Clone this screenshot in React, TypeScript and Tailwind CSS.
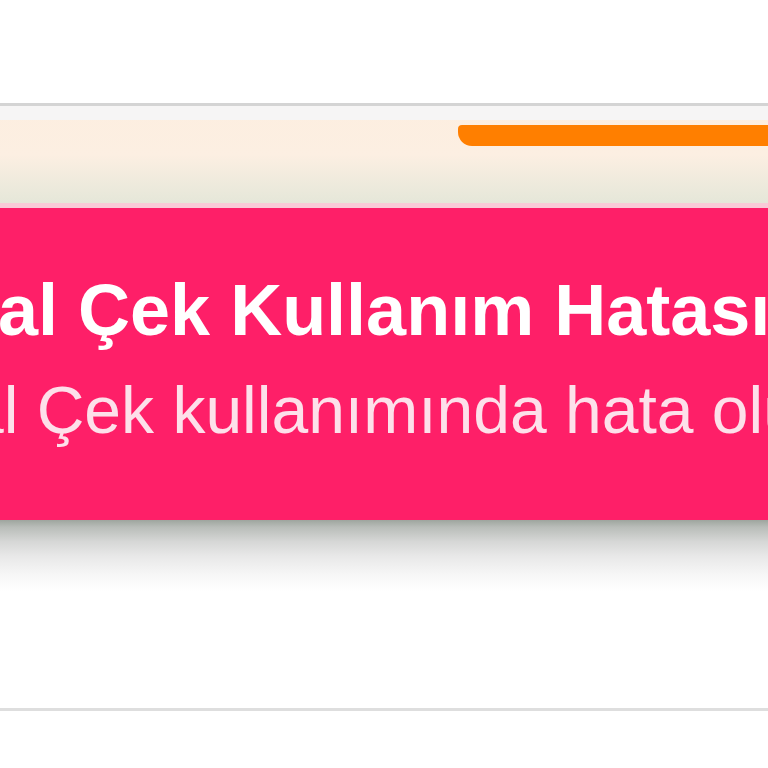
import React from "react";

export default function App() {
  return (
    <div className="w-[768px] h-[768px] overflow-hidden bg-white flex flex-col" style={{ fontFamily: '"Liberation Sans", Arial, sans-serif' }}>
      <div className="h-[103px] shrink-0 bg-white" />
      <div className="h-[3px] shrink-0 bg-[#d4d4d4]" />
      <div className="relative h-[97px] shrink-0 bg-gradient-to-b from-[#fdeee0] via-[#fcefe2] to-[#e5e7d9]">
        <div className="h-[14px] bg-[#f6f5f5]" />
        <div className="absolute left-[458px] top-[19px] right-0 h-[21px] bg-[#ff7f00] rounded-bl-[14px] rounded-tl-[4px]" />
      </div>
      <div className="h-[5px] shrink-0 bg-[#f9cad7]" />
      <div className="h-[312px] shrink-0 bg-[#fe1f68] overflow-hidden flex flex-col">
        <div className="h-[62px] shrink-0" />
        <div className="whitespace-nowrap text-white font-bold text-[72px] leading-[80px] -ml-[2px]">al Çek Kullanım Hatası</div>
        <div className="h-[20px] shrink-0" />
        <div className="whitespace-nowrap text-[#fde0ea] text-[66px] leading-[80px] -ml-[33px]">al Çek kullanımında hata oluştu</div>
      </div>
      <div className="h-[72px] shrink-0 bg-[linear-gradient(to_bottom,#9ea59e_0%,#b9bdb9_10%,#d6d7d6_30%,#e8e8e8_50%,#f6f6f6_75%,#ffffff_100%)]" />
      <div className="h-[116px] shrink-0 bg-white" />
      <div className="h-[3px] shrink-0 bg-[#dedede]" />
      <div className="flex-1 bg-white" />
    </div>
  );
}
